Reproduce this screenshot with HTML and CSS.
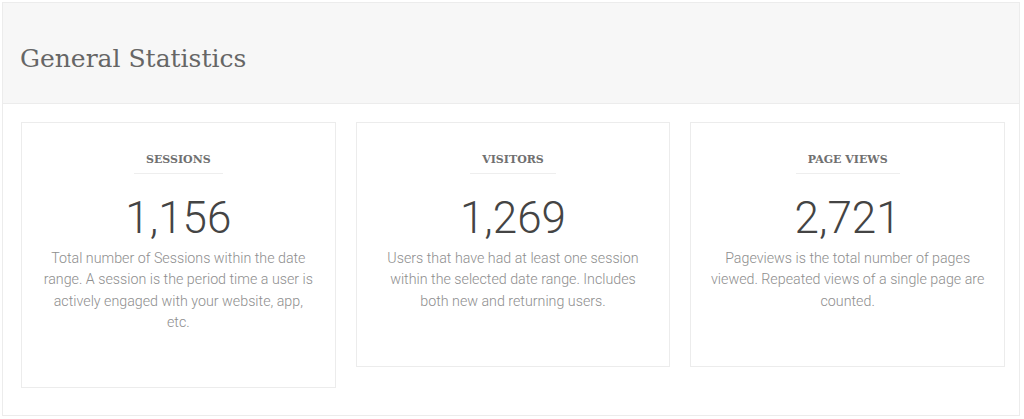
FILE: index.html
```html
<!DOCTYPE html>
<html lang="en">
<head>
<meta charset="utf-8">
<title>General Statistics</title>
<link rel="stylesheet" href="styles.css">
</head>
<body>
<section class="panel">
  <header class="panel-header">
    <h2 class="panel-title">General Statistics</h2>
  </header>
  <div class="panel-body">
    <div class="stat-card">
      <h3 class="stat-label">SESSIONS</h3>
      <div class="stat-value">1,156</div>
      <p class="stat-desc">Total number of Sessions within the date range. A session is the period time a user is actively engaged with your website, app, etc.</p>
    </div>
    <div class="stat-card">
      <h3 class="stat-label">VISITORS</h3>
      <div class="stat-value">1,269</div>
      <p class="stat-desc">Users that have had at least one session within the selected date range. Includes both new and returning users.</p>
    </div>
    <div class="stat-card">
      <h3 class="stat-label">PAGE VIEWS</h3>
      <div class="stat-value">2,721</div>
      <p class="stat-desc">Pageviews is the total number of pages viewed. Repeated views of a single page are counted.</p>
    </div>
  </div>
</section>
</body>
</html>
```

FILE: styles.css
```css
html, body {
  margin: 0;
  padding: 0;
  background: #ffffff;
}

body {
  font-family: Roboto, "Liberation Sans", Arial, sans-serif;
}

.panel {
  margin: 2px 0 0 2px;
  width: 1018px;
  height: 414px;
  box-sizing: border-box;
  border: 1px solid #ececec;
  background: #ffffff;
}

.panel-header {
  height: 101px;
  box-sizing: border-box;
  background: #f7f7f7;
  border-bottom: 1px solid #ececec;
  display: flex;
  align-items: center;
  padding: 11px 0 0 17px;
}

.panel-title {
  margin: 0;
  font-family: "Roboto Slab", "DejaVu Serif", serif;
  font-weight: 300;
  font-size: 25px;
  color: #666666;
}

.panel-body {
  display: grid;
  grid-template-columns: repeat(3, 1fr);
  column-gap: 20px;
  align-items: start;
  padding: 18px 14px 0 18px;
}

.stat-card {
  border: 1px solid #ececec;
  text-align: center;
  padding: 0 19px 54px;
}

.stat-label {
  display: inline-block;
  margin: 29px 0 0;
  padding: 0 12px 5px;
  border-bottom: 1px solid #eeeeee;
  font-family: "Roboto Slab", "DejaVu Serif", serif;
  font-weight: 700;
  font-size: 11px;
  line-height: 16px;
  color: #707070;
}

.stat-value {
  margin-top: 20px;
  font-weight: 300;
  font-size: 44px;
  line-height: 48px;
  color: #444444;
}

.stat-desc {
  margin: 6px 0 0;
  font-weight: 300;
  font-size: 14.25px;
  line-height: 21.25px;
  color: #8e8e8e;
}
```
